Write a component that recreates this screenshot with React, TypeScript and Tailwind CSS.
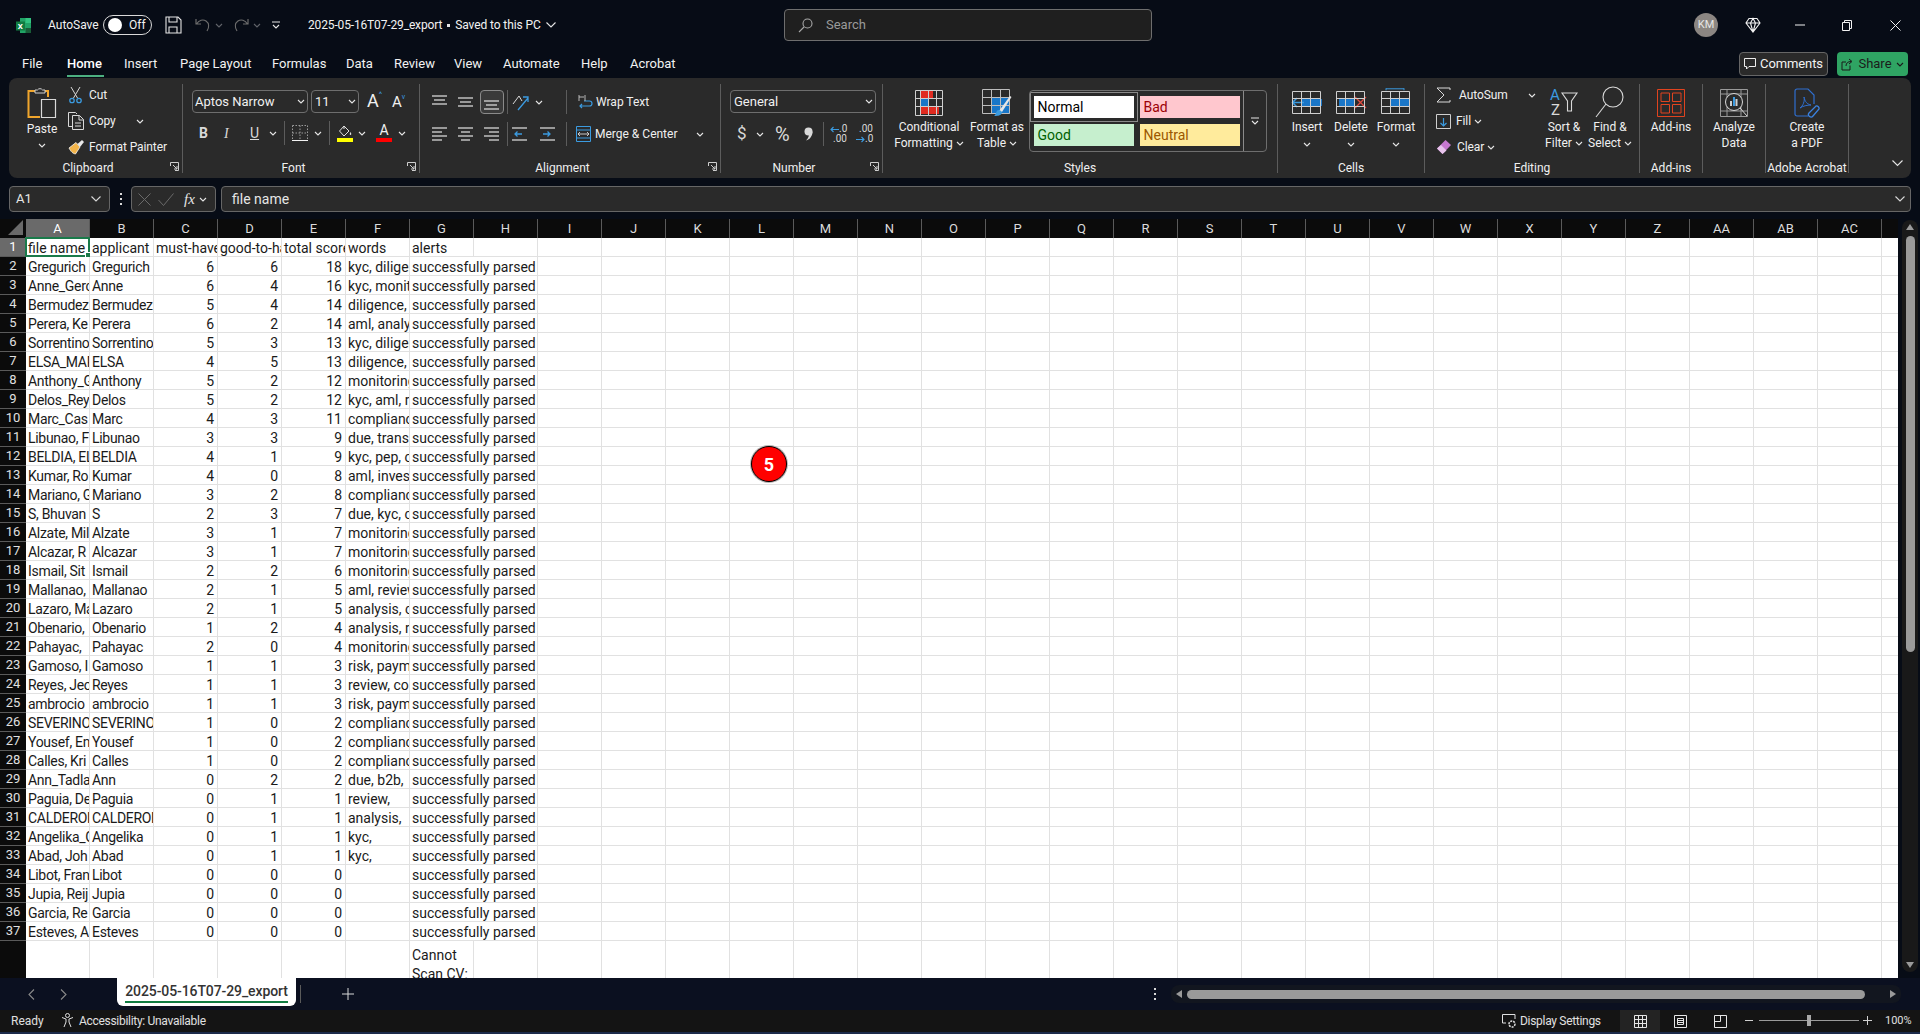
import type { ReactNode } from "react";

const COLS = ["A","B","C","D","E","F","G","H","I","J","K","L","M","N","O","P","Q","R","S","T","U","V","W","X","Y","Z","AA","AB","AC"];

const FILES = ["Gregurich","Anne_Gerc","Bermudez","Perera, Ke","Sorrentino","ELSA_MAR","Anthony_G","Delos_Rey","Marc_Cas","Libunao, F","BELDIA, EL","Kumar, Ro","Mariano, G","S, Bhuvan","Alzate, Mil","Alcazar, R","Ismail, Sit","Mallanao,","Lazaro, Ma","Obenario,","Pahayac,","Gamoso, I","Reyes, Jeo","ambrocio","SEVERINO","Yousef, En","Calles, Kri","Ann_Tadla","Paguia, De","CALDERON","Angelika_G","Abad, Joh","Libot, Fran","Jupia, Reij","Garcia, Re","Esteves, A"];
const NAMES = ["Gregurich","Anne","Bermudez","Perera","Sorrentino","ELSA","Anthony","Delos","Marc","Libunao","BELDIA","Kumar","Mariano","S","Alzate","Alcazar","Ismail","Mallanao","Lazaro","Obenario","Pahayac","Gamoso","Reyes","ambrocio","SEVERINO","Yousef","Calles","Ann","Paguia","CALDERON","Angelika","Abad","Libot","Jupia","Garcia","Esteves"];
const MUST = [6,6,5,6,5,4,5,5,4,3,4,4,3,2,3,3,2,2,2,1,2,1,1,1,1,1,1,0,0,0,0,0,0,0,0,0];
const GOOD = [6,4,4,2,3,5,2,2,3,3,1,0,2,3,1,1,2,1,1,2,0,1,1,1,0,0,0,2,1,1,1,1,0,0,0,0];
const TOTAL = [18,16,14,14,13,13,12,12,11,9,9,8,8,7,7,7,6,5,5,4,4,3,3,3,2,2,2,2,1,1,1,1,0,0,0,0];
const WORDS = ["kyc, diligence","kyc, monitoring","diligence,","aml, analysis","kyc, diligence","diligence,","monitoring","kyc, aml, r","compliance","due, transaction","kyc, pep, c","aml, investigation","compliance","due, kyc, c","monitoring","monitoring","monitoring","aml, review","analysis, c","analysis, r","monitoring","risk, payment","review, co","risk, payment","compliance","compliance","compliance","due, b2b,","review,","analysis,","kyc,","kyc,","","","",""];
const HEADERS = ["file name","applicant","must-have","good-to-have","total score","words","alerts"];
const TABS: [string, string][] = [["Insert","w-[56px]"],["Page Layout","w-[92px]"],["Formulas","w-[74px]"],["Data","w-[48px]"],["Review","w-[60px]"],["View","w-[49px]"],["Automate","w-[78px]"],["Help","w-[49px]"],["Acrobat","w-[60px]"]];

function Chev({ className = "" }: { className?: string }) {
    return (
        <svg width="8" height="5" viewBox="0 0 8 5" className={`shrink-0 ${className}`}>
            <path d="M1 1l3 3 3-3" fill="none" stroke="#e6e6e6" strokeWidth="1.1" />
        </svg>
    );
}

function Launcher() {
    return (
        <svg width="9" height="9" viewBox="0 0 9 9" className="shrink-0">
            <path d="M.5 4V.5h8v8H5M3 3l4 4M7 4v3H4" fill="none" stroke="#cfcfcf" strokeWidth="1" />
        </svg>
    );
}

function Sep({ h = "h-[89px]" }: { h?: string }) {
    return <div className={`w-px shrink-0 bg-[#5c5c5c] ${h}`} />;
}

function Group({ width, label, launcher, children }: { width: string; label: string; launcher?: boolean; children: ReactNode }) {
    return (
        <div className={`flex h-full shrink-0 items-center ${width}`}>
            <div className="flex h-full min-w-0 flex-1 flex-col">
                <div className="h-[80px]">{children}</div>
                <div className="flex h-[20px] items-start justify-center">
                    <div className={`relative flex w-full justify-center pt-[2px] text-[12px] leading-[16px] ${launcher ? "pr-[15px]" : ""}`}>
                        {label}
                        {launcher && (
                            <span className="absolute right-[3px] top-[4px]">
                                <Launcher />
                            </span>
                        )}
                    </div>
                </div>
            </div>
            <Sep />
        </div>
    );
}

function LargeBtn({ width, icon, lines, chev, chevBelow }: { width: string; icon: ReactNode; lines: string[]; chev?: boolean; chevBelow?: boolean }) {
    return (
        <div className={`flex shrink-0 flex-col items-center ${width}`}>
            <div className="flex h-[36px] items-center justify-center">{icon}</div>
            <div className="-mt-[2px] flex flex-col items-center text-[12px] leading-[16px]">
                {lines.map((line, i) => (
                    <div key={line} className="flex items-center gap-[3px] whitespace-nowrap">
                        {line}
                        {chev && i === lines.length - 1 && <Chev />}
                    </div>
                ))}
                {chevBelow && <Chev className="mt-[7px]" />}
            </div>
        </div>
    );
}

function Lines({ rows, arrow }: { rows: [number, number, number][]; arrow?: "l" | "r" }) {
    return (
        <svg width="16" height="16" viewBox="0 0 16 16">
            {rows.map(([x1, x2, y]) => (
                <path key={y} d={`M${x1} ${y}H${x2}`} stroke="#e4e4e4" strokeWidth="1.2" />
            ))}
            {arrow === "l" && <path d="M10 8H3M5.5 5.5 3 8l2.500 2.500" fill="none" stroke="#3b9be0" strokeWidth="1.300" />}
            {arrow === "r" && <path d="M3 8h7M7.500 5.500 10 8l-2.500 2.500" fill="none" stroke="#3b9be0" strokeWidth="1.300" />}
        </svg>
    );
}

function CellsGrid({ children }: { children?: ReactNode }) {
    return (
        <svg width="32" height="30" viewBox="0 0 32 30">
            {children}
            <path d="M1.500 3.500h28v22h-28zM1.500 10.500h28M1.500 18.500h28M10.500 3.500v22M19.500 3.500v22" fill="none" stroke="#cfcfcf" strokeWidth="1" />
        </svg>
    );
}

function TitleBar() {
    return (
        <div className="flex h-[50px] shrink-0 items-center text-[12px] text-[#f2f2f2]">
            <div className="flex w-[784px] shrink-0 items-center">
                <svg width="16" height="17" viewBox="0 0 16 17" className="ml-[16px]">
                    <path d="M4 1h11v15H4z" fill="#21a366" />
                    <path d="M9.500 1H15v5H9.500z" fill="#33c481" />
                    <path d="M9.500 11H15v5H9.500z" fill="#185c37" />
                    <path d="M0 4.500h9v9H0z" fill="#107c41" />
                    <text x="1.800" y="12" fontSize="8" fontWeight="700" fill="#fff" fontFamily="Roboto, sans-serif">X</text>
                </svg>
                <span className="ml-[16px] w-[52px]">AutoSave</span>
                <div className="ml-[3px] flex h-[20px] w-[49px] items-center rounded-full border border-[#d9d9d9] pl-[4px]">
                    <div className="h-[14px] w-[14px] rounded-full bg-white" />
                    <span className="ml-[7px] text-[12px]">Off</span>
                </div>
                <svg width="17" height="18" viewBox="0 0 17 18" className="ml-[13px]">
                    <path d="M1 1h12l3 3v13H1zM4 1v5h8V1M4 17v-6h8v6" fill="none" stroke="#e6e6e6" strokeWidth="1.100" />
                </svg>
                <svg width="16" height="16" viewBox="0 0 16 16" className="ml-[13px]">
                    <path d="M1 2v5h5M1.500 7C4 3 8 2 11 4s3.500 6 1 10" fill="none" stroke="#6d6d6d" strokeWidth="1.200" />
                </svg>
                <Chev className="ml-[4px] opacity-40" />
                <svg width="16" height="16" viewBox="0 0 16 16" className="ml-[10px]">
                    <path d="M15 2v5h-5M14.500 7C12 3 8 2 5 4s-3.500 6-1 10" fill="none" stroke="#6d6d6d" strokeWidth="1.200" />
                </svg>
                <Chev className="ml-[4px] opacity-40" />
                <svg width="8" height="8" viewBox="0 0 8 8" className="ml-[11px]">
                    <path d="M0 1h8M1 4l3 3 3-3" fill="none" stroke="#e6e6e6" strokeWidth="1.100" />
                </svg>
                <span className="ml-[28px] whitespace-nowrap tracking-[-0.15px]">2025-05-16T07-29_export</span>
                <span className="mx-[5px] h-[3px] w-[3px] bg-[#e6e6e6]" />
                <span className="whitespace-nowrap tracking-[-0.1px]">Saved to this PC</span>
                <svg width="10" height="6" viewBox="0 0 10 6" className="ml-[5px]">
                    <path d="M.5.500 5 5 9.500.500" fill="none" stroke="#e6e6e6" strokeWidth="1.100" />
                </svg>
            </div>
            <div className="flex h-[32px] w-[368px] shrink-0 items-center rounded-[4px] border border-[#6e6e6e] bg-[#1f1f1f] text-[#9a9a9a]">
                <svg width="15" height="15" viewBox="0 0 15 15" className="ml-[13px]">
                    <circle cx="9.500" cy="5.500" r="4.500" fill="none" stroke="#a8a8a8" strokeWidth="1.100" />
                    <path d="M6 9 1 14" stroke="#a8a8a8" strokeWidth="1.100" />
                </svg>
                <span className="ml-[13px] text-[13px]">Search</span>
            </div>
            <div className="flex flex-1 items-center">
                <div className="ml-[542px] flex h-[24px] w-[24px] items-center justify-center rounded-full bg-[#8b8682] text-[11px] text-[#e6e6e6]">KM</div>
                <svg width="16" height="16" viewBox="0 0 16 16" className="ml-[27px]">
                    <path d="M4 1.500h8L15 6l-7 9-7-9zM1 6h14M5.500 6 8 15l2.500-9M5.500 6 8 1.500 10.500 6" fill="none" stroke="#f2f2f2" strokeWidth="1.100" />
                </svg>
                <svg width="10" height="2" viewBox="0 0 10 2" className="ml-[34px]">
                    <path d="M0 1h10" stroke="#f2f2f2" strokeWidth="1" />
                </svg>
                <svg width="10" height="11" viewBox="0 0 10 11" className="ml-[37px]">
                    <path d="M.5 2.500h7v8h-7zM2.500 2.500V.5h7v8h-2" fill="none" stroke="#f2f2f2" strokeWidth="1" />
                </svg>
                <svg width="11" height="11" viewBox="0 0 11 11" className="ml-[38px]">
                    <path d="m.5.500 10 10M10.500.500l-10 10" stroke="#f2f2f2" strokeWidth="1" />
                </svg>
            </div>
        </div>
    );
}

function TabRow() {
    return (
        <div className="flex h-[28px] shrink-0 items-center text-[13px] text-[#f2f2f2]">
            <span className="ml-[22px] w-[45px]">File</span>
            <span className="relative flex h-[28px] w-[37px] items-center font-medium text-white">
                Home
                <span className="absolute inset-x-0 bottom-[1px] h-[2px] bg-[#4caf80]" />
            </span>
            <div className="ml-[20px] flex">
                {TABS.map(([t, w]) => (
                    <span key={t} className={w}>{t}</span>
                ))}
            </div>
            <div className="ml-auto mr-[12px] flex items-center gap-[9px]">
                <div className="flex h-[24px] w-[89px] items-center justify-center gap-[4px] rounded-[4px] border border-[#666] bg-[#2a2a2a] tracking-[-0.1px]">
                    <svg width="12" height="12" viewBox="0 0 12 12">
                        <path d="M.5.500h11v8H5L2.500 11V8.500h-2z" fill="none" stroke="#eee" strokeWidth="1" />
                    </svg>
                    Comments
                </div>
                <div className="flex h-[24px] w-[71px] items-center justify-center gap-[4px] rounded-[4px] bg-[#2fa463] text-[#1b1b1b]">
                    <svg width="13" height="13" viewBox="0 0 13 13">
                        <path d="M9 7.500V12H1V4h4M5 8c0-3 2-4.500 5-4.500M8 1l3 2.500L8 6" fill="none" stroke="#1b1b1b" strokeWidth="1" />
                    </svg>
                    Share
                    <Chev className="invert" />
                </div>
            </div>
        </div>
    );
}

function ClipboardGroup() {
    return (
        <Group width="w-[174px]" label="Clipboard" launcher>
            <div className="flex">
                <div className="ml-[15px] flex w-[36px] flex-col items-center pt-[9px]">
                    <svg width="30" height="32" viewBox="0 0 30 32">
                        <path d="M11 4H1.500v26H13" fill="none" stroke="#f0a52c" strokeWidth="2" />
                        <path d="M16 4h5v6" fill="none" stroke="#f0a52c" strokeWidth="2" />
                        <path d="M8 6V3h2.500a3 3 0 0 1 5 0H18v3z" fill="#2a2a2a" stroke="#cfcfcf" strokeWidth="1" />
                        <path d="M14.500 12.500h14v18h-14z" fill="#2a2a2a" stroke="#d9d9d9" strokeWidth="1.200" />
                    </svg>
                    <span className="mt-[2px] text-[12px] leading-[16px]">Paste</span>
                    <Chev className="mt-[6px]" />
                </div>
                <div className="ml-[8px] flex flex-col gap-[6px] pt-[7px] text-[12px] leading-[20px] tracking-[-0.1px]">
                    <div className="flex h-[20px] items-center gap-[4px]">
                        <svg width="15" height="18" viewBox="0 0 15 18">
                            <path d="M3 1l6.500 11M12 1 5.500 12" stroke="#d9d9d9" strokeWidth="1" />
                            <circle cx="4" cy="14.500" r="2.200" fill="none" stroke="#3b9be0" strokeWidth="1.300" />
                            <circle cx="11" cy="14.500" r="2.200" fill="none" stroke="#3b9be0" strokeWidth="1.300" />
                        </svg>
                        <span className="ml-[2px]">Cut</span>
                    </div>
                    <div className="flex h-[20px] items-center gap-[4px]">
                        <svg width="17" height="18" viewBox="0 0 17 18">
                            <path d="M4 14.500H.5v-14h7L9 2" fill="none" stroke="#d9d9d9" strokeWidth="1" />
                            <path d="M4.500 3.500h7l4 4v10h-11zM11 3.500v4.500h4.500M7 11h6M7 14h6" fill="none" stroke="#d9d9d9" strokeWidth="1" />
                        </svg>
                        <span>Copy</span>
                        <Chev className="ml-[16px]" />
                    </div>
                    <div className="flex h-[20px] items-center gap-[4px]">
                        <svg width="17" height="17" viewBox="0 0 17 17">
                            <path d="M1 9 8 3.500l4 4.500-4.500 7C5 14.500 3 13 1 9z" fill="#f2b44a" stroke="#f5f5f5" strokeWidth=".8" />
                            <path d="m9.500 5 4.500-4 2 2-4 5" fill="#e8e8e8" />
                        </svg>
                        <span className="whitespace-nowrap">Format Painter</span>
                    </div>
                </div>
            </div>
        </Group>
    );
}

function FontGroup() {
    return (
        <Group width="w-[237px]" label="Font" launcher>
            <div className="ml-[9px] flex pt-[12px]">
                <div className="flex h-[23px] w-[116px] items-center justify-between rounded-[4px] border border-[#6e6e6e] pl-[2px] pr-[2px] text-[13px]">
                    Aptos Narrow <Chev />
                </div>
                <div className="ml-[3px] flex h-[23px] w-[48px] items-center justify-between rounded-[4px] border border-[#6e6e6e] pl-[3px] pr-[2px] text-[13px]">
                    11 <Chev />
                </div>
                <div className="ml-[8px] flex h-[23px] w-[20px] items-start text-[18px] leading-[22px]">
                    A<span className="text-[8px] leading-[10px] text-[#3b9be0]">^</span>
                </div>
                <div className="ml-[5px] flex h-[23px] w-[20px] items-start pt-[2px] text-[15px] leading-[20px]">
                    A<span className="text-[7px] leading-[10px] text-[#3b9be0]">v</span>
                </div>
            </div>
            <div className="ml-[16px] mt-[8px] flex h-[24px] items-center text-[14px]">
                <span className="w-[25px] font-bold text-[#d9d9d9]">B</span>
                <span className="w-[26px] italic text-[#d9d9d9] [font-family:'Liberation_Serif',serif]">I</span>
                <span className="w-[19px] text-[#d9d9d9] underline">U</span>
                <Chev />
                <div className="mx-[7px] h-[24px] w-px bg-[#5c5c5c]" />
                <svg width="16" height="16" viewBox="0 0 16 16">
                    <path d="M.5.500h15v15" fill="none" stroke="#9a9a9a" strokeWidth="1" strokeDasharray="1.500 1.500" />
                    <path d="M.5.500v15M8 .5v15M.5 8h15" fill="none" stroke="#9a9a9a" strokeWidth="1" strokeDasharray="1.500 1.500" />
                    <path d="M0 15.500h16" stroke="#f2f2f2" strokeWidth="1" />
                </svg>
                <Chev className="ml-[6px]" />
                <div className="mx-[7px] h-[24px] w-px bg-[#5c5c5c]" />
                <div className="flex w-[16px] flex-col items-center">
                    <svg width="14" height="12" viewBox="0 0 14 12">
                        <path d="M6 1 1.500 6l4.500 5L11 6zM6 1V4" fill="none" stroke="#e0e0e0" strokeWidth="1" />
                        <path d="M12.500 7c1 1.500 1 3 0 3s-1-1.500 0-3z" fill="#e0e0e0" />
                    </svg>
                    <div className="mt-px h-[4px] w-[16px] bg-[#ffff00]" />
                </div>
                <Chev className="ml-[5px]" />
                <div className="ml-[10px] flex w-[16px] flex-col items-center">
                    <span className="h-[13px] text-[14px] leading-[13px]">A</span>
                    <div className="mt-[1px] h-[4px] w-[16px] bg-[#ff0000]" />
                </div>
                <Chev className="ml-[6px]" />
            </div>
        </Group>
    );
}

function AlignmentGroup() {
    const top: [number, number, number][] = [[0,15,2],[2,13,6],[0,15,10]];
    const mid: [number, number, number][] = [[0,15,4],[2,13,8],[0,15,12]];
    const bot: [number, number, number][] = [[0,15,7],[2,13,11],[0,15,15]];
    const left: [number, number, number][] = [[0,15,2],[0,10,6],[0,15,10],[0,10,14]];
    const center: [number, number, number][] = [[0,15,2],[3,12,6],[0,15,10],[3,12,14]];
    const right: [number, number, number][] = [[0,15,2],[5,15,6],[0,15,10],[5,15,14]];
    const ind: [number, number, number][] = [[0,15,2],[0,15,14]];
    return (
        <Group width="w-[301px]" label="Alignment" launcher>
            <div className="ml-[12px] flex pt-[12px]">
                <div className="flex h-[24px] w-[26px] items-center"><Lines rows={top} /></div>
                <div className="flex h-[24px] w-[22px] items-center"><Lines rows={mid} /></div>
                <div className="flex h-[24px] w-[24px] items-center justify-center rounded-[4px] border border-[#8a8a8a] bg-[#3a3a3a]"><Lines rows={bot} /></div>
                <div className="mx-[3px] h-[24px] w-px bg-[#5c5c5c]" />
                <div className="ml-px flex h-[24px] w-[31px] items-center gap-[5px]">
                    <svg width="18" height="18" viewBox="0 0 18 18">
                        <path d="M1 11 7 3l3 5" fill="none" stroke="#d9d9d9" strokeWidth="1" />
                        <path d="M6 17 16 5M11 4h5v5" fill="none" stroke="#3b9be0" strokeWidth="1.300" />
                    </svg>
                    <Chev />
                </div>
                <div className="ml-[23px] h-[24px] w-px bg-[#5c5c5c]" />
                <div className="ml-[11px] flex h-[24px] items-center gap-[3px] whitespace-nowrap text-[12px]">
                    <svg width="15" height="17" viewBox="0 0 15 17">
                        <path d="M2 12h9.500a2 2 0 0 0 0-5H6M4 10l-2 2 2 2" fill="none" stroke="#3b9be0" strokeWidth="1.200" />
                        <path d="M1 1v6M7 1v6M1 3h5" fill="none" stroke="#d9d9d9" strokeWidth=".8" />
                    </svg>
                    Wrap Text
                </div>
            </div>
            <div className="ml-[12px] mt-[8px] flex">
                <div className="flex h-[24px] w-[26px] items-center"><Lines rows={left} /></div>
                <div className="flex h-[24px] w-[26px] items-center"><Lines rows={center} /></div>
                <div className="flex h-[24px] w-[20px] items-center"><Lines rows={right} /></div>
                <div className="mx-[3px] h-[24px] w-px bg-[#5c5c5c]" />
                <div className="ml-px flex h-[24px] w-[28px] items-center"><Lines rows={ind} arrow="l" /></div>
                <div className="flex h-[24px] w-[26px] items-center"><Lines rows={ind} arrow="r" /></div>
                <div className="h-[24px] w-px bg-[#5c5c5c]" />
                <div className="ml-[9px] flex h-[24px] items-center gap-[4px] whitespace-nowrap text-[12px]">
                    <svg width="15" height="16" viewBox="0 0 15 16">
                        <path d="M.5.500h14v15H.5zM.5 4h14M.5 12h14" fill="none" stroke="#3b9be0" strokeWidth="1" />
                        <path d="M2 8h11M4 6 2 8l2 2M11 6l2 2-2 2" fill="none" stroke="#d9d9d9" strokeWidth=".9" />
                    </svg>
                    Merge &amp; Center
                    <Chev className="ml-[15px]" />
                </div>
            </div>
        </Group>
    );
}

function Arrow({ dir }: { dir: "l" | "r" }) {
    return (
        <svg width="9" height="7" viewBox="0 0 9 7" className="shrink-0">
            <path d={dir === "l" ? "M9 3.500H1M3.500 1 1 3.500 3.500 6" : "M0 3.500h8M5.500 1 8 3.500 5.500 6"} fill="none" stroke="#3b9be0" strokeWidth="1.100" />
        </svg>
    );
}

function NumberGroup() {
    return (
        <Group width="w-[162px]" label="Number" launcher>
            <div className="ml-[9px] mt-[12px] flex h-[23px] w-[146px] items-center justify-between rounded-[4px] border border-[#6e6e6e] pl-[3px] pr-[2px] text-[13px]">
                General <Chev />
            </div>
            <div className="ml-[16px] mt-[9px] flex h-[24px] items-center">
                <span className="w-[14px] text-[17px] text-[#d9d9d9]">$</span>
                <Chev className="ml-[5px]" />
                <span className="ml-[11px] w-[22px] text-[20px] text-[#d9d9d9]">%</span>
                <svg width="9" height="14" viewBox="0 0 9 14" className="ml-[7px] mr-[3px]">
                    <circle cx="4.500" cy="4.500" r="4" fill="#d9d9d9" />
                    <path d="M8.500 4.500C8.500 9 6 12.500 2 13.500 4.500 11 5 9 5 7z" fill="#d9d9d9" />
                </svg>
                <div className="ml-[7px] h-[24px] w-px bg-[#5c5c5c]" />
                <div className="ml-[6px] flex w-[17px] flex-col text-[10px] leading-[10px] text-[#d9d9d9]">
                    <span className="flex items-center justify-between"><Arrow dir="l" />.0</span>
                    <span className="text-right">.00</span>
                </div>
                <div className="ml-[9px] flex w-[17px] flex-col text-[10px] leading-[10px] text-[#d9d9d9]">
                    <span className="text-right">.00</span>
                    <span className="flex items-center justify-between"><Arrow dir="r" />.0</span>
                </div>
            </div>
        </Group>
    );
}

function StyleChip({ label, className }: { label: string; className: string }) {
    return <div className={`flex h-[22px] w-[100px] items-center pl-[4px] text-[14px] ${className}`}>{label}</div>;
}

function StylesGroup() {
    return (
        <Group width="w-[395px]" label="Styles">
            <div className="flex pt-[7px]">
                <LargeBtn
                    width="w-[92px]"
                    chev
                    lines={["Conditional", "Formatting"]}
                    icon={
                        <svg width="28" height="26" viewBox="0 0 28 26">
                            <path d="M5 1h13v7H5zM5 17h19v7H5z" fill="#e02b20" />
                            <path d="M5 9h9v7H5z" fill="#1976c8" />
                            <path d="M.5.500h27v25H.5zM.5 8.500h27M.5 16.500h27M5.500.5v25M13.500.5v25M21.500.5v25" fill="none" stroke="#cfcfcf" strokeWidth="1" />
                        </svg>
                    }
                />
                <LargeBtn
                    width="w-[44px]"
                    chev
                    lines={["Format as", "Table"]}
                    icon={
                        <svg width="30" height="30" viewBox="0 0 30 30">
                            <path d="M10 9h18v17H10z" fill="#1976c8" />
                            <path d="M.5 1.500h27v24H.5zM.5 9.500h27M.5 17.500h27M9.500 1.500v24M18.500 1.500v24" fill="none" stroke="#bdbdbd" strokeWidth="1" />
                            <path d="m17 23 11-15 1.500 1L20 24z" fill="#e6e6e6" />
                            <path d="M16 22c2 0 4 1 4 3-1 3-6 3-8 3 2-1 2-5 4-6z" fill="#3b9be0" />
                        </svg>
                    }
                />
                <div className="ml-[10px] mt-[5px] flex h-[62px] w-[238px] overflow-hidden rounded-[4px] border border-[#6e6e6e]">
                    <div className="grid w-[213px] grid-cols-[100px_100px] content-center justify-center gap-x-[6px] gap-y-[6px]">
                        <StyleChip label="Normal" className="bg-white text-black outline-[3px] outline-offset-0 outline-[#2a2a2a] ring-[4px] ring-[#8a8a8a]" />
                        <StyleChip label="Bad" className="bg-[#ffc7ce] text-[#9c0006]" />
                        <StyleChip label="Good" className="bg-[#c6efce] text-[#006100]" />
                        <StyleChip label="Neutral" className="bg-[#ffeb9c] text-[#9c5700]" />
                    </div>
                    <div className="flex flex-1 items-center justify-center border-l border-[#8a8a8a]">
                        <svg width="8" height="8" viewBox="0 0 8 8">
                            <path d="M0 1h8M1 4l3 3 3-3" fill="none" stroke="#e6e6e6" strokeWidth="1.100" />
                        </svg>
                    </div>
                </div>
            </div>
        </Group>
    );
}

function CellsGroup() {
    return (
        <Group width="w-[147px]" label="Cells">
            <div className="ml-[7px] flex pt-[7px]">
                <LargeBtn
                    width="w-[44px]"
                    chevBelow
                    lines={["Insert"]}
                    icon={
                        <CellsGrid>
                            <path d="M11 11h20v7H11z" fill="#1976c8" />
                            <path d="M13 14.500H1M6 10l-4.500 4.500L6 19" fill="none" stroke="#3b9be0" strokeWidth="1.500" />
                        </CellsGrid>
                    }
                />
                <LargeBtn
                    width="w-[44px]"
                    chevBelow
                    lines={["Delete"]}
                    icon={
                        <CellsGrid>
                            <path d="M4 11h16v7H4z" fill="#1976c8" />
                            <path d="m20 9 11 11M31 9 20 20" stroke="#e04a3f" strokeWidth="1.300" />
                        </CellsGrid>
                    }
                />
                <LargeBtn
                    width="w-[46px]"
                    chevBelow
                    lines={["Format"]}
                    icon={
                        <CellsGrid>
                            <path d="M11 11h19v7H11z" fill="#1976c8" />
                            <path d="M6 .5h18M6 0v2M24 0v2" stroke="#3b9be0" strokeWidth="1" transform="translate(0 .3)" />
                        </CellsGrid>
                    }
                />
            </div>
        </Group>
    );
}

function EditingGroup() {
    return (
        <Group width="w-[215px]" label="Editing">
            <div className="flex">
                <div className="ml-[11px] flex w-[108px] flex-col gap-[6px] pt-[7px] text-[12px] tracking-[-0.1px]">
                    <div className="flex h-[20px] items-center gap-[7px]">
                        <svg width="16" height="16" viewBox="0 0 16 16">
                            <path d="M14 3V1H1l7 7-7 7h13v-2" fill="none" stroke="#d9d9d9" strokeWidth="1" />
                        </svg>
                        AutoSum
                        <Chev className="ml-[13px]" />
                    </div>
                    <div className="flex h-[20px] items-center gap-[5px]">
                        <svg width="15" height="15" viewBox="0 0 15 15">
                            <path d="M.5.500h14v14H.5z" fill="none" stroke="#cfcfcf" strokeWidth="1" />
                            <path d="M7.500 4v8M4.500 9l3 3 3-3" fill="none" stroke="#3b9be0" strokeWidth="1.200" />
                        </svg>
                        Fill <Chev className="-ml-[2px]" />
                    </div>
                    <div className="flex h-[20px] items-center gap-[5px]">
                        <svg width="16" height="16" viewBox="0 0 16 16">
                            <path d="M1 9.500 9.500 1 15 6l-8.500 9z" fill="#c678d0" />
                            <path d="M1 9.500 5 6l5.500 5.500-4 3.500z" fill="#e8c4ec" />
                        </svg>
                        Clear <Chev className="-ml-[2px]" />
                    </div>
                </div>
                <div className="-ml-[3px] pt-[7px]">
                    <LargeBtn
                        width="w-[46px]"
                        chev
                        lines={["Sort &", "Filter"]}
                        icon={
                            <svg width="30" height="34" viewBox="0 0 30 34">
                                <text x="1" y="14" fontSize="15" fill="#3b9be0" fontFamily="Roboto, sans-serif">A</text>
                                <text x="2" y="29" fontSize="15" fill="#d9d9d9" fontFamily="Roboto, sans-serif">Z</text>
                                <path d="M13 7h15l-5.500 8v10h-4V15z" fill="none" stroke="#d9d9d9" strokeWidth="1.100" />
                            </svg>
                        }
                    />
                </div>
                <div className="pt-[7px]">
                    <LargeBtn
                        width="w-[46px]"
                        chev
                        lines={["Find &", "Select"]}
                        icon={
                            <svg width="30" height="34" viewBox="0 0 30 34">
                                <circle cx="18" cy="11" r="10" fill="none" stroke="#d9d9d9" strokeWidth="1.100" />
                                <path d="M11 18 1 31" stroke="#d9d9d9" strokeWidth="1.100" />
                            </svg>
                        }
                    />
                </div>
            </div>
        </Group>
    );
}

function RibbonSingles() {
    return (
        <>
            <Group width="w-[63px]" label="Add-ins">
                <div className="pt-[7px]">
                    <LargeBtn
                        width="w-full"
                        lines={["Add-ins"]}
                        icon={
                            <svg width="28" height="28" viewBox="0 0 28 28">
                                <path d="M.5.500h27v27H.5zM4 4h8.500v8.500H4zM15.500 4H24v8.500h-8.500zM4 15.500h8.500V24H4zM15.500 15.500H24V24h-8.500z" fill="none" stroke="#e0431f" strokeWidth="1" />
                            </svg>
                        }
                    />
                </div>
            </Group>
            <Group width="w-[63px]" label="">
                <div className="pt-[7px]">
                    <LargeBtn
                        width="w-full"
                        lines={["Analyze", "Data"]}
                        icon={
                            <svg width="28" height="28" viewBox="0 0 28 28">
                                <path d="M.5.500h27v27H.5zM.5 5h27M7 .5v27M21 .5v27M.5 22h27" fill="none" stroke="#9a9a9a" strokeWidth="1" />
                                <circle cx="14" cy="13" r="8.500" fill="#2a2a2a" stroke="#d9d9d9" strokeWidth="1" />
                                <path d="M10 12h2v5h-2zM15.500 10h2v7h-2z" fill="#cfcfcf" />
                                <path d="M13 8h2v9h-2z" fill="#3b9be0" />
                                <path d="m20 19 7 8" stroke="#d9d9d9" strokeWidth="1" />
                            </svg>
                        }
                    />
                </div>
            </Group>
            <Group width="w-[83px]" label="Adobe Acrobat">
                <div className="pt-[7px]">
                    <LargeBtn
                        width="w-full"
                        lines={["Create", "a PDF"]}
                        icon={
                            <svg width="26" height="30" viewBox="0 0 26 30">
                                <path d="M14 28H3a2 2 0 0 1-2-2V3a2 2 0 0 1 2-2h11l6 6v9" fill="none" stroke="#2f6fd0" strokeWidth="1.200" />
                                <path d="M6 20c3-2 5-7 4-11 1 5 3 7 7 8-4 0-8 1-11 3z" fill="none" stroke="#2f6fd0" strokeWidth="1" />
                                <path d="m15 25 7-7a2.500 2.500 0 0 1 3 3l-6 7a2.500 2.500 0 0 1-4-3z" fill="none" stroke="#3b82e0" strokeWidth="1.300" />
                            </svg>
                        }
                    />
                </div>
            </Group>
            <div className="flex h-full flex-1 items-end justify-end pb-[11px] pr-[8px]">
                <svg width="11" height="7" viewBox="0 0 11 7">
                    <path d="m.5.500 5 5 5-5" fill="none" stroke="#e6e6e6" strokeWidth="1.100" />
                </svg>
            </div>
        </>
    );
}

function Ribbon() {
    return (
        <div className="mx-[9px] flex h-[100px] shrink-0 items-center rounded-[8px] bg-[#2a2a2a] text-[#f0f0f0]">
            <ClipboardGroup />
            <FontGroup />
            <AlignmentGroup />
            <NumberGroup />
            <StylesGroup />
            <CellsGroup />
            <EditingGroup />
            <RibbonSingles />
        </div>
    );
}

function FormulaBar() {
    return (
        <div className="mx-[9px] mt-[8px] flex h-[26px] shrink-0 items-center text-[13px] text-[#e6e6e6]">
            <div className="flex h-full w-[101px] items-center justify-between rounded-[4px] border border-[#666] bg-[#2a2a2a] pl-[6px] pr-[8px]">
                A1
                <svg width="10" height="6" viewBox="0 0 10 6">
                    <path d="M.5.500 5 5 9.500.500" fill="none" stroke="#d9d9d9" strokeWidth="1.100" />
                </svg>
            </div>
            <div className="flex w-[21px] flex-col items-center gap-[3px]">
                <span className="h-[2px] w-[2px] bg-[#d9d9d9]" />
                <span className="h-[2px] w-[2px] bg-[#d9d9d9]" />
                <span className="h-[2px] w-[2px] bg-[#d9d9d9]" />
            </div>
            <div className="flex h-full w-[85px] items-center rounded-[4px] border border-[#666] bg-[#2a2a2a] pl-[6px]">
                <svg width="13" height="13" viewBox="0 0 13 13">
                    <path d="m.5.500 12 12M12.500.500l-12 12" stroke="#6a6a6a" strokeWidth="1" />
                </svg>
                <svg width="16" height="13" viewBox="0 0 16 13" className="ml-[7px]">
                    <path d="m.5 7 5 5.500 10-12" fill="none" stroke="#6a6a6a" strokeWidth="1" />
                </svg>
                <span className="ml-[10px] text-[15px] italic text-[#e6e6e6] [font-family:'Liberation_Serif',serif]">fx</span>
                <Chev className="ml-[4px]" />
            </div>
            <div className="ml-[5px] flex h-full flex-1 items-center justify-between rounded-[4px] border border-[#666] bg-[#2a2a2a] pl-[10px] pr-[5px]">
                <span className="text-[14px]">file name</span>
                <svg width="10" height="6" viewBox="0 0 10 6">
                    <path d="M.5.500 5 5 9.500.500" fill="none" stroke="#d9d9d9" strokeWidth="1.100" />
                </svg>
            </div>
        </div>
    );
}

function Cell({ children, right, wide, selected, tight }: { children?: ReactNode; right?: boolean; wide?: boolean; selected?: boolean; tight?: boolean }) {
    return (
        <div
            className={`relative h-[19px] shrink-0 whitespace-nowrap border-b border-r border-[#e1e1e1] leading-[20px] ${wide ? "w-32" : "w-16"} ${right ? "pr-[3px] text-right" : "pl-[2px] text-left"} ${wide || selected ? "" : "overflow-hidden"} ${tight ? "tracking-[-0.3px]" : ""}`}
        >
            {children}
            {selected && (
                <div className="absolute -inset-px border-2 border-[#1a7a4a]">
                    <span className="absolute -bottom-[3px] -right-[3px] h-[6px] w-[6px] border border-white bg-[#1a7a4a]" />
                </div>
            )}
        </div>
    );
}

function RowHead({ n, active }: { n?: number; active?: boolean }) {
    return (
        <div
            className={`flex h-full w-[26px] shrink-0 items-center justify-center border-b border-[#5a5a5a] text-[13px] ${active ? "bg-[#6a6a6a] text-white" : "bg-[#0b0b0b] text-[#e0e0e0]"}`}
        >
            {n}
        </div>
    );
}

function EmptyCols({ from }: { from: number }) {
    return (
        <>
            {COLS.slice(from).map((c) => (
                <Cell key={c} />
            ))}
            <div className="h-full flex-1 border-b border-[#e1e1e1]" />
        </>
    );
}

function Sheet() {
    return (
        <div className="flex min-h-0 flex-1 pt-[7px]">
            <div className="relative min-w-0 flex-1 overflow-hidden">
                <div className="flex h-[19px] bg-[#0b0b0b] text-[13px] text-[#dcdcdc]">
                    <div className="flex w-[26px] shrink-0 items-end justify-end pb-[3px] pr-[3px]">
                        <svg width="15" height="15" viewBox="0 0 15 15">
                            <path d="M15 0v15H0z" fill="#6a6a6a" />
                        </svg>
                    </div>
                    {COLS.map((c, i) => (
                        <div
                            key={c}
                            className={`flex w-16 shrink-0 items-center justify-center border-r border-[#5a5a5a] ${i === 0 ? "bg-[#6a6a6a] text-white" : ""}`}
                        >
                            {c}
                        </div>
                    ))}
                </div>
                <div className="bg-white text-[14px] text-[#1a1a1a]">
                    <div className="flex h-[19px]">
                        <RowHead n={1} active />
                        {HEADERS.map((h, i) => (
                            <Cell key={h} selected={i === 0}>{h}</Cell>
                        ))}
                        <EmptyCols from={7} />
                    </div>
                    {FILES.map((f, i) => (
                        <div key={f} className="flex h-[19px]">
                            <RowHead n={i + 2} />
                            <Cell tight>{f}</Cell>
                            <Cell tight>{NAMES[i]}</Cell>
                            <Cell right>{MUST[i]}</Cell>
                            <Cell right>{GOOD[i]}</Cell>
                            <Cell right>{TOTAL[i]}</Cell>
                            <Cell>{WORDS[i]}</Cell>
                            <Cell wide>successfully parsed</Cell>
                            <EmptyCols from={8} />
                        </div>
                    ))}
                    <div className="flex h-[60px]">
                        <RowHead />
                        {COLS.slice(0, 6).map((c) => (
                            <div key={c} className="h-full w-16 shrink-0 border-r border-[#e1e1e1]" />
                        ))}
                        <div className="h-full w-16 shrink-0 whitespace-normal border-r border-[#e1e1e1] pl-[2px] pt-[5px] leading-[19px]">
                            Cannot Scan CV:
                        </div>
                        {COLS.slice(7).map((c) => (
                            <div key={c} className="h-full w-16 shrink-0 border-r border-[#e1e1e1]" />
                        ))}
                    </div>
                </div>
                <div className="absolute left-[751px] top-[227px] flex h-[36px] w-[36px] items-center justify-center rounded-full border-[1.5px] border-black bg-[#ff0000] text-[18px] font-bold text-white ring-1 ring-[#b5b5b5]">
                    5
                </div>
            </div>
            <div className="flex w-[22px] shrink-0 flex-col items-center pl-[2px] pt-px">
                <div className="flex h-[752px] w-[16px] flex-col items-center rounded-[8px] bg-[#191919]">
                    <svg width="8" height="6" viewBox="0 0 8 6" className="mt-[4px]">
                        <path d="M4 0l4 6H0z" fill="#9a9a9a" />
                    </svg>
                    <div className="mt-[6px] h-[416px] w-[9px] rounded-full bg-[#9a9a9a]" />
                    <svg width="8" height="6" viewBox="0 0 8 6" className="mb-[4px] mt-auto">
                        <path d="M4 6l4-6H0z" fill="#9a9a9a" />
                    </svg>
                </div>
            </div>
        </div>
    );
}

function SheetTabs() {
    return (
        <div className="flex h-[32px] shrink-0 items-start bg-[#0b1020]">
            <svg width="7" height="11" viewBox="0 0 7 11" className="ml-[28px] mt-[11px]">
                <path d="M6 .5 1 5.500l5 5" fill="none" stroke="#8a8a8a" strokeWidth="1.100" />
            </svg>
            <svg width="7" height="11" viewBox="0 0 7 11" className="ml-[25px] mt-[11px]">
                <path d="m1 .5 5 5-5 5" fill="none" stroke="#8a8a8a" strokeWidth="1.100" />
            </svg>
            <div className="ml-[50px] flex h-[28px] w-[179px] flex-col items-center rounded-b-[6px] bg-white pt-[4px] text-[14px] font-medium leading-[18px] tracking-[-0.1px] text-[#333]">
                2025-05-16T07-29_export
                <div className="mt-px h-[2px] w-[163px] bg-[#107c41]" />
            </div>
            <div className="ml-[4px] mt-[7px] h-[18px] w-px bg-[#5a5a5a]" />
            <svg width="12" height="12" viewBox="0 0 12 12" className="ml-[41px] mt-[10px]">
                <path d="M6 0v12M0 6h12" stroke="#d9d9d9" strokeWidth="1" />
            </svg>
            <div className="ml-[800px] mt-[10px] flex flex-col gap-[3px]">
                <span className="h-[2px] w-[2px] bg-[#d9d9d9]" />
                <span className="h-[2px] w-[2px] bg-[#d9d9d9]" />
                <span className="h-[2px] w-[2px] bg-[#d9d9d9]" />
            </div>
            <div className="ml-[15px] mt-[7px] flex h-[18px] w-[730px] items-center rounded-[8px] bg-[#12161f] pl-[5px] pr-[5px]">
                <svg width="6" height="8" viewBox="0 0 6 8">
                    <path d="M0 4l6-4v8z" fill="#9a9a9a" />
                </svg>
                <div className="ml-[5px] h-[9px] w-[678px] rounded-full bg-[#9a9a9a]" />
                <svg width="6" height="8" viewBox="0 0 6 8" className="ml-auto">
                    <path d="M6 4 0 0v8z" fill="#9a9a9a" />
                </svg>
            </div>
        </div>
    );
}

function StatusBar() {
    return (
        <div className="flex h-[24px] shrink-0 items-start border-b-2 border-[#1c2a4a] bg-[#141414] text-[12px] leading-[22px] text-[#e0e0e0]">
            <span className="ml-[11px] w-[32px]">Ready</span>
            <svg width="15" height="15" viewBox="0 0 15 15" className="ml-[18px] mt-[3px]">
                <circle cx="6.500" cy="2.500" r="2" fill="none" stroke="#e0e0e0" strokeWidth="1" />
                <path d="M1 4.500 5 6v3l-2 5M12 4.500 8 6v3l2 5" fill="none" stroke="#e0e0e0" strokeWidth="1" />
            </svg>
            <span className="ml-[3px] w-[126px] whitespace-nowrap tracking-[-0.3px]">Accessibility: Unavailable</span>
            <svg width="15" height="15" viewBox="0 0 15 15" className="ml-[1297px] mt-[4px]">
                <path d="M4 9H.5V.5H13V5" fill="none" stroke="#e0e0e0" strokeWidth="1" />
                <circle cx="10" cy="10" r="3" fill="none" stroke="#e0e0e0" strokeWidth="1.500" strokeDasharray="2 1" />
            </svg>
            <span className="ml-[3px] w-[81px] whitespace-nowrap tracking-[-0.3px]">Display Settings</span>
            <div className="ml-[19px] flex h-[22px] w-[40px] items-center justify-center bg-[#232323]">
                <svg width="13" height="13" viewBox="0 0 13 13">
                    <path d="M.5.500h12v12H.5zM.5 4.500h12M.5 8.500h12M4.500.5v12M8.500.5v12" fill="none" stroke="#e6e6e6" strokeWidth="1" />
                </svg>
            </div>
            <svg width="13" height="13" viewBox="0 0 13 13" className="ml-[14px] mt-[5px]">
                <path d="M.5.500h12v12H.5zM3.500 3.500h6v6h-6zM3.500 5.500h6M3.500 7.500h6" fill="none" stroke="#e6e6e6" strokeWidth="1" />
            </svg>
            <svg width="13" height="13" viewBox="0 0 13 13" className="ml-[27px] mt-[5px]">
                <path d="M.5.500h12v12H.5zM6.500.5v6h-6" fill="none" stroke="#e6e6e6" strokeWidth="1" />
            </svg>
            <div className="ml-[18px] mt-[10px] h-px w-[8px] bg-[#d0d0d0]" />
            <div className="relative ml-[6px] mt-[10px] h-px w-[100px] bg-[#9a9a9a]">
                <span className="absolute left-[48px] top-[-5px] h-[11px] w-[4px] bg-[#a8a8a8]" />
            </div>
            <svg width="9" height="9" viewBox="0 0 9 9" className="ml-[4px] mt-[6px]">
                <path d="M4.500 0v9M0 4.500h9" stroke="#d0d0d0" strokeWidth="1" />
            </svg>
            <span className="ml-[13px] text-[11px]">100%</span>
        </div>
    );
}

export default function App() {
    return (
        <div className="flex h-[1034px] w-[1920px] flex-col overflow-hidden bg-[#070c16] [font-family:Roboto,sans-serif]">
            <TitleBar />
            <TabRow />
            <Ribbon />
            <FormulaBar />
            <Sheet />
            <SheetTabs />
            <StatusBar />
        </div>
    );
}
